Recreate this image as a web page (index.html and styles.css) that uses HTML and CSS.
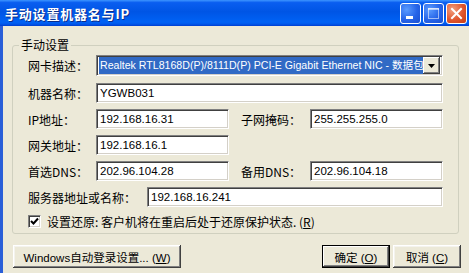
FILE: index.html
```html
<!DOCTYPE html>
<html lang="zh-CN">
<head>
  <meta charset="UTF-8">
  <meta name="viewport" content="width=device-width, initial-scale=1.0">
  <title>手动设置机器名与IP</title>
  <link rel="stylesheet" href="styles.css">
</head>
<body>

<div class="window">
  <div class="titlebar">
    <span class="title">手动设置机器名与IP</span>
    <div class="controls">
      <span class="ctl ctl-min">
        <svg width="19" height="19" viewBox="0 0 19 19"><rect x="5" y="12" width="7" height="3" fill="#fff"/></svg>
      </span>
      <span class="ctl ctl-max">
        <svg width="19" height="19" viewBox="0 0 19 19"><rect x="4.5" y="4.5" width="10" height="10" fill="none" stroke="#fff" stroke-width="1" opacity="0.55"/><rect x="4" y="4" width="11" height="2" fill="#fff" opacity="0.55"/></svg>
      </span>
      <span class="ctl ctl-close">
        <svg width="19" height="19" viewBox="0 0 19 19"><path d="M5 5 L14 14 M14 5 L5 14" stroke="#fff" stroke-width="2" stroke-linecap="square"/></svg>
      </span>
    </div>
  </div>

  <div class="body">
    <fieldset class="group">
      <legend>手动设置</legend>

      <div class="row row-first">
        <label class="lbl">网卡描述：</label>
        <div class="combo">
          <span class="combo-text"><span class="sel">Realtek RTL8168D(P)/8111D(P) PCI-E Gigabit Ethernet NIC - 数据包</span></span>
          <span class="combo-btn">
            <svg width="7" height="4" viewBox="0 0 7 4"><path d="M0 0 H7 L3.5 4 Z" fill="#000"/></svg>
          </span>
        </div>
      </div>

      <div class="row">
        <label class="lbl">机器名称：</label>
        <input class="field wide" type="text" value="YGWB031">
      </div>

      <div class="row">
        <label class="lbl">IP地址：</label>
        <input class="field" type="text" value="192.168.16.31">
        <label class="lbl lbl-right">子网掩码：</label>
        <input class="field wide" type="text" value="255.255.255.0">
      </div>

      <div class="row">
        <label class="lbl">网关地址：</label>
        <input class="field" type="text" value="192.168.16.1">
      </div>

      <div class="row">
        <label class="lbl">首选DNS：</label>
        <input class="field" type="text" value="202.96.104.28">
        <label class="lbl lbl-right">备用DNS：</label>
        <input class="field wide" type="text" value="202.96.104.18">
      </div>

      <div class="row">
        <label class="lbl lbl-server">服务器地址或名称：</label>
        <input class="field wide" type="text" value="192.168.16.241">
      </div>

      <div class="check-row">
        <span class="checkbox">
          <svg width="9" height="9" viewBox="0 0 9 9"><path d="M1 4 L3.5 6.5 L8 1.5" fill="none" stroke="#000" stroke-width="2"/></svg>
        </span>
        <span>设置还原: 客户机将在重启后处于还原保护状态. (<u>R</u>)</span>
      </div>
    </fieldset>

    <div class="actions">
      <button class="btn btn-autologin">Windows自动登录设置... (<u>W</u>)</button>
      <div class="actions-right">
        <button class="btn btn-default">确定 (<u>O</u>)</button>
        <button class="btn">取消 (<u>C</u>)</button>
      </div>
    </div>
  </div>
</div>

</body>
</html>
```

FILE: styles.css
```css
/* Reset */
* {
  margin: 0;
  padding: 0;
  box-sizing: border-box;
}

body {
  font-family: "Liberation Sans", "Noto Sans CJK SC", sans-serif;
  font-size: 12px;
  color: #000;
  background: #ece9d8;
  width: 469px;
  height: 273px;
  overflow: hidden;
}

/* Window frame */
.window {
  width: 469px;
  height: 273px;
  background: #ece9d8;
  border-left: 3px solid #2a5fd8;
}

.titlebar {
  height: 26px;
  margin-left: -3px;
  display: flex;
  align-items: center;
  justify-content: space-between;
  padding: 0 2px 0 5px;
  background: linear-gradient(to bottom, #3d95ff 0%, #0a5ef0 10%, #0055e5 45%, #0062f5 85%, #0059ec 92%, #003dd0 100%);
}

.title {
  color: #fff;
  font-family: "Noto Sans CJK SC", sans-serif;
  font-weight: bold;
  font-size: 13px;
  text-shadow: 1px 1px 0 #0b2d8a;
  letter-spacing: 0.8px;
}

.controls {
  display: flex;
  gap: 2px;
}

.ctl {
  width: 21px;
  height: 21px;
  border: 1px solid #fff;
  border-radius: 3px;
  display: flex;
  align-items: center;
  justify-content: center;
  background: radial-gradient(circle at 30% 30%, #5a9bff 0%, #2664e8 55%, #1a4fd0 100%);
}

.ctl-close {
  background: radial-gradient(circle at 30% 30%, #f2a080 0%, #e0562e 55%, #c63d14 100%);
}

/* Group box */
.body {
  padding-top: 11px;
}

.group {
  margin: 0 10px 0 9px;
  padding: 2px 15px 5px 15px;
  border: 1px solid #d0d0bf;
  border-radius: 3px;
  min-width: 0;
}

.group legend {
  margin-left: -9px;
  padding: 0 2px;
  font-family: "Noto Sans CJK SC", sans-serif;
  font-size: 12px;
  line-height: 16px;
}

.row {
  display: flex;
  align-items: center;
  height: 20px;
  margin-bottom: 6px;
}

.row-first {
  height: 21px;
  margin-bottom: 7px;
}

.lbl {
  width: 68px;
  flex: none;
  font-family: "Noto Sans CJK SC", sans-serif;
  font-size: 12px;
  white-space: nowrap;
}

.lbl-right {
  width: 69px;
  margin-left: 12px;
}

.lbl-server {
  width: 119px;
}

/* Sunken text boxes */
.field {
  width: 133px;
  height: 20px;
  flex: none;
  padding: 0 3px;
  font-family: "Liberation Sans", sans-serif;
  font-size: 11.5px;
  color: #000;
  background: #fff;
  border: 1px solid;
  border-color: #808080 #fff #fff #808080;
  box-shadow: inset 1px 1px 0 #404040, inset -1px -1px 0 #d4d0c8;
  outline: none;
}

.field.wide {
  flex: 1;
  width: auto;
  min-width: 0;
}

/* Combo box */
.combo {
  flex: 1;
  min-width: 0;
  height: 21px;
  display: flex;
  align-items: center;
  padding: 2px;
  background: #fff;
  border: 1px solid;
  border-color: #808080 #fff #fff #808080;
  box-shadow: inset 1px 1px 0 #404040, inset -1px -1px 0 #d4d0c8;
}

.combo-text {
  flex: 1;
  min-width: 0;
  height: 17px;
  overflow: hidden;
  white-space: nowrap;
}

.sel {
  display: block;
  height: 17px;
  line-height: 17px;
  padding-left: 1px;
  background: #316ac5;
  color: #fff;
  font-size: 10.6px;
}

.combo-btn {
  width: 17px;
  height: 17px;
  flex: none;
  display: flex;
  align-items: center;
  justify-content: center;
  background: #ece9d8;
  box-shadow: inset -1px -1px 0 #404040, inset 1px 1px 0 #fff, inset -2px -2px 0 #808080;
}

/* Checkbox */
.check-row {
  display: flex;
  align-items: center;
  gap: 6px;
  height: 14px;
  margin-top: 7px;
  font-family: "Noto Sans CJK SC", sans-serif;
  font-size: 12px;
  white-space: nowrap;
}

.checkbox {
  width: 13px;
  height: 13px;
  display: flex;
  align-items: center;
  justify-content: center;
  background: #fff;
  border: 1px solid;
  border-color: #808080 #fff #fff #808080;
  box-shadow: inset 1px 1px 0 #404040, inset -1px -1px 0 #d4d0c8;
}

/* Bottom buttons */
.actions {
  display: flex;
  justify-content: space-between;
  margin: 11px 8px 0 10px;
}

.actions-right {
  display: flex;
  gap: 3px;
}

.btn {
  height: 23px;
  padding: 0 8px;
  font-family: "Liberation Sans", "Noto Sans CJK SC", sans-serif;
  font-size: 11.5px;
  color: #000;
  background: #ece9d8;
  border: none;
  box-shadow: inset -1px -1px 0 #404040, inset 1px 1px 0 #fff, inset -2px -2px 0 #808080, inset 2px 2px 0 #f4f3ee;
}

.btn-autologin {
  width: 168px;
}

.btn-default,
.actions-right .btn {
  width: 68px;
}

.btn-default {
  box-shadow: inset 0 0 0 1px #000, inset -2px -2px 0 #404040, inset 2px 2px 0 #fff, inset -3px -3px 0 #808080;
}

.btn u {
  text-decoration: underline;
}
```
